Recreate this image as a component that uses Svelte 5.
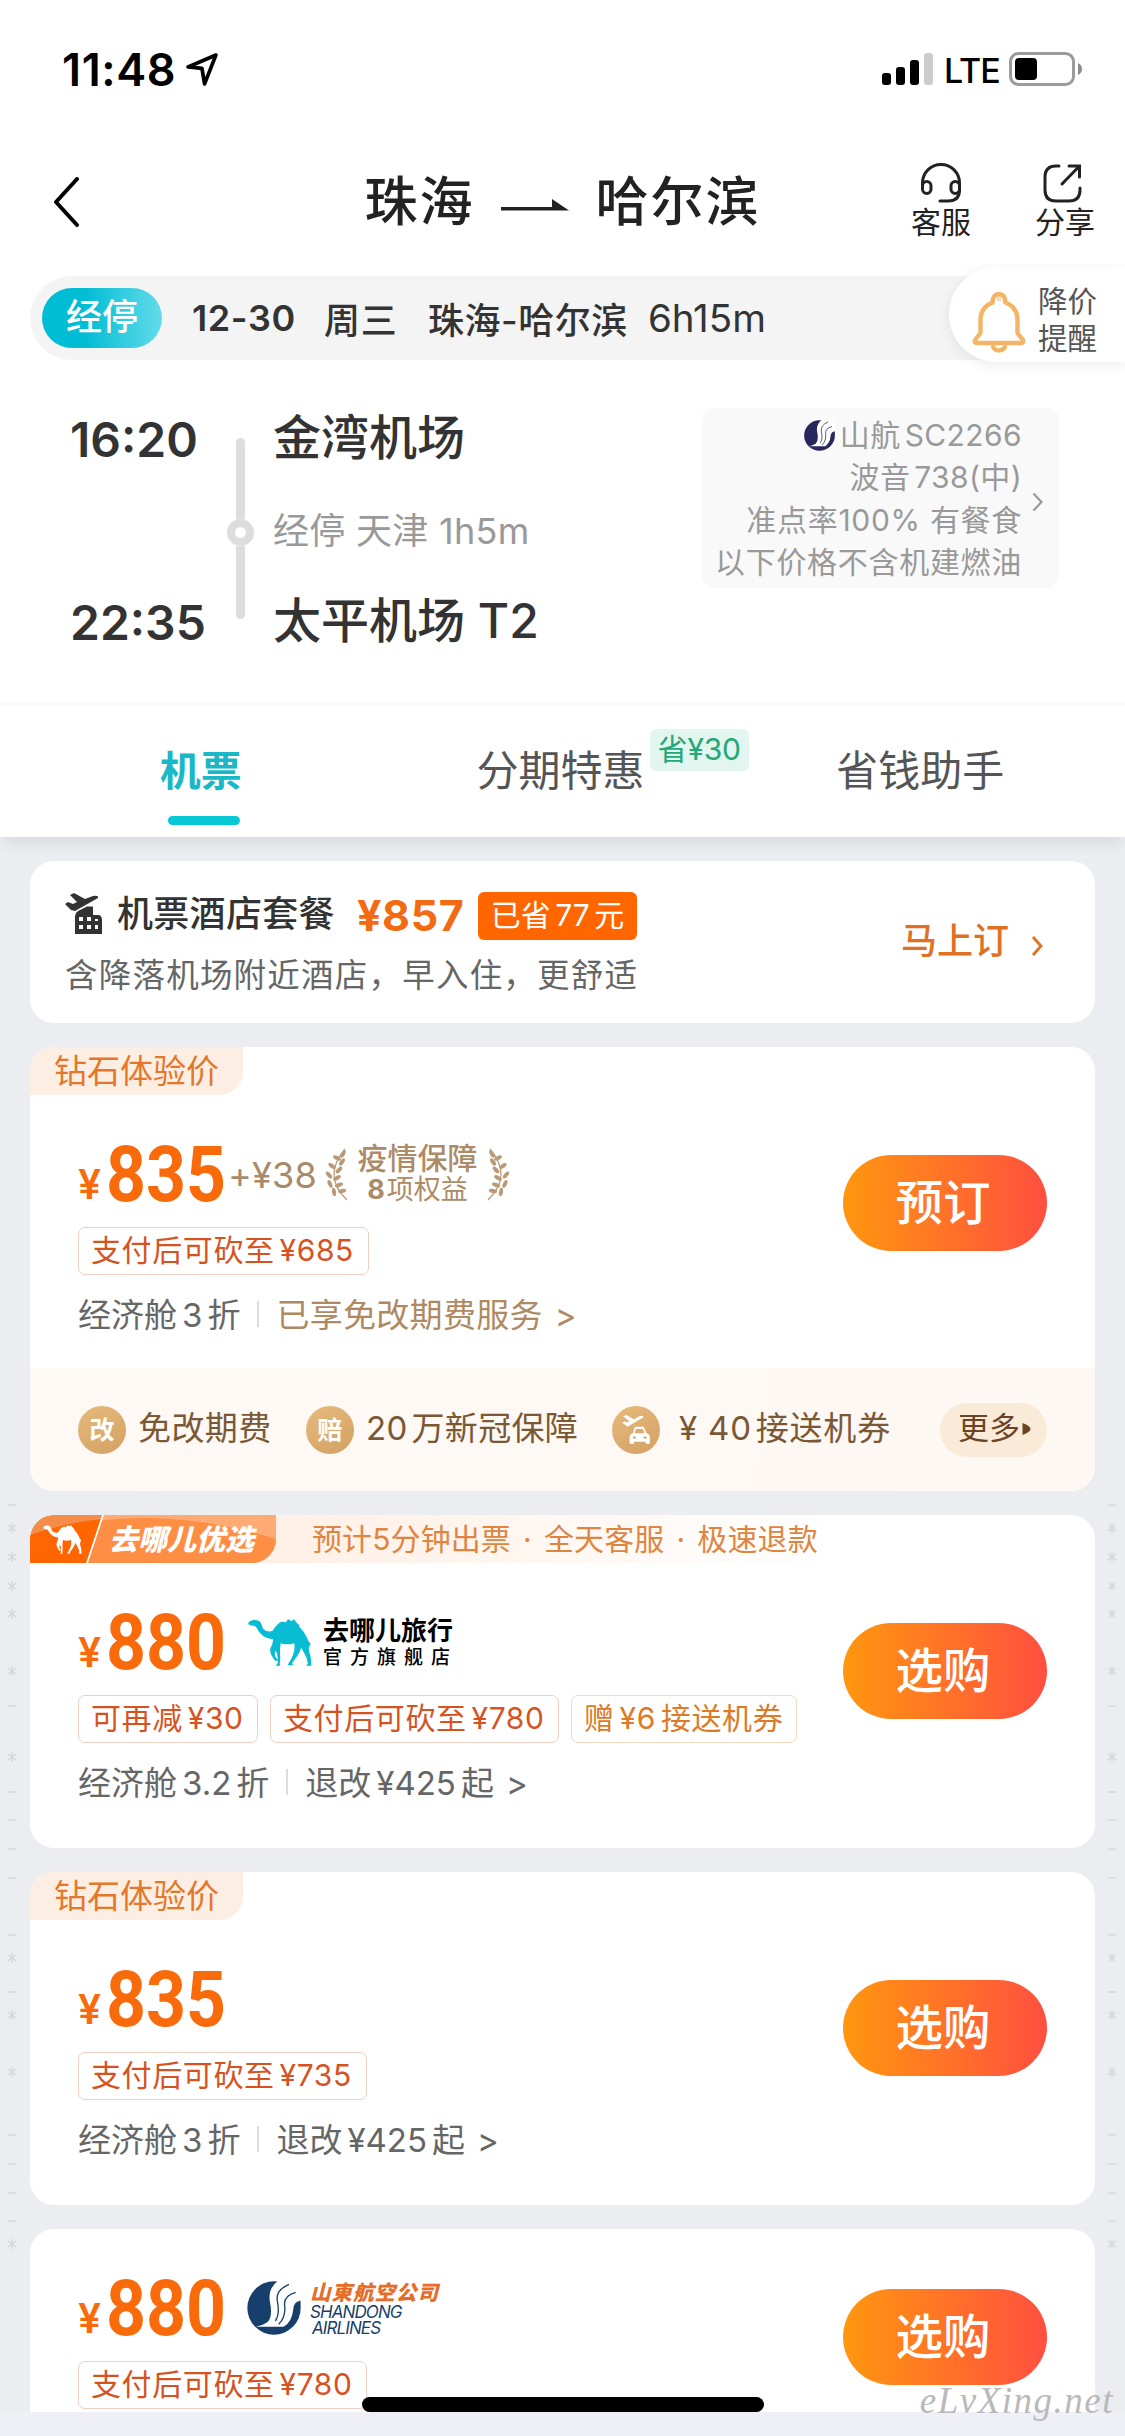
<script>
  const details = ['波音 738(中)', '准点率100% 有餐食', '以下价格不含机建燃油'];

  const offers = [
    {
      tag: '钻石体验价', price: '835', extra: true, action: '预订',
      chips: [{ label: '支付后可砍至', amount: '¥685', w: 291 }],
      cabin: '3', terms: 'free'
    },
    {
      banner: true, price: '880', brand: 'qunar', action: '选购',
      chips: [
        { label: '可再减', amount: '¥30', w: 180 },
        { label: '支付后可砍至', amount: '¥780', w: 289 },
        { label: '赠', amount: '¥6', tail: '接送机券', soft: true, w: 226 }
      ],
      cabin: '3.2', terms: 'fee'
    },
    {
      tag: '钻石体验价', price: '835', action: '选购',
      chips: [{ label: '支付后可砍至', amount: '¥735', w: 289 }],
      cabin: '3', terms: 'fee'
    },
    {
      price: '880', brand: 'shandong', action: '选购', compact: true,
      chips: [{ label: '支付后可砍至', amount: '¥780', w: 289 }]
    }
  ];

  // Faint dash and star marks running down both page margins
  const marks = [
    [1505, '-'], [1528, '*'], [1557, '*'], [1586, '*'], [1614, '*'], [1671, '*'],
    [1706, '-'], [1757, '*'], [1792, '-'], [1820, '-'], [1849, '-'], [1878, '-'],
    [1935, '-'], [1958, '*'], [1992, '-'], [2015, '*'], [2072, '*'], [2135, '-'],
    [2164, '-'], [2193, '-'], [2221, '-'], [2244, '*']
  ];

  const leaves = [
    [18, 7, -60], [12, 11, 25], [17, 15, -55], [7, 19, 35], [14, 23, -45],
    [4, 28, 50], [12, 31, -30], [5, 37, 65], [14, 38, -20], [9, 45, 80], [17, 44, -10]
  ];
</script>

{#snippet camel(cls)}
  <svg class={cls} viewBox="53 56 190 140" preserveAspectRatio="none">
    <path fill="currentColor" d="M54 68Q58 60 72 59Q84 58 90 66Q96 76 97 84Q108 96 125 92Q135 76 146 67Q155 62 165 66L172 57L182 62L190 57L198 68Q206 72 206 80Q222 96 228 112Q232 125 239 130L234 140Q232 150 238 165Q241 178 240 190L242 195H226L231 188Q228 170 220 158L211 142Q208 155 198 168L184 187L187 194H170Q180 180 186 165Q194 145 190 128Q170 135 150 128Q148 140 148 155Q150 175 147 190L150 195H135L141 188Q142 170 139 158L134 150Q132 160 133 166L142 179L134 181Q114 156 120 142Q128 130 127 116Q112 115 100 108Q88 100 82 88Q78 78 70 76Q60 77 54 72Z" />
  </svg>
{/snippet}

{#snippet airline(cls)}
  <svg class={cls} viewBox="51 60 162 162">
    <circle cx="132" cy="141" r="80" fill="currentColor" />
    <path fill="#fff" d="M146 58Q112 82 120 124Q129 168 112 184Q98 194 78 197H164Q212 170 208 116L216 90L196 56Z" />
    <path fill="none" stroke="currentColor" stroke-width="4" d="M177 70Q136 88 142 120Q150 160 136 180M197 94Q160 104 164 134Q168 168 146 190" />
    <path fill="currentColor" d="M212 120Q192 120 190 144Q186 184 160 198Q208 200 212 120Z" />
  </svg>
{/snippet}

{#snippet laurel(cls)}
  <svg class={cls} viewBox="0 0 24 54">
    <path d="M22 53Q-3 29 20 2" fill="none" stroke="#b99a77" stroke-width="1.2" />
    {#each leaves as [x, y, r]}
      <ellipse cx={x} cy={y} rx="4.2" ry="2" fill="#b99a77" transform="rotate({r} {x} {y})" />
    {/each}
  </svg>
{/snippet}

<div class="screen">
  <header class="status">
    <span class="clock">11:48</span>
    <svg class="locate" viewBox="0 0 32 32"><path d="M2 13.500L29 2L18 30L15.500 15Z" fill="none" stroke="#000" stroke-width="3.600" stroke-linejoin="round" /></svg>
    <svg class="signal" viewBox="0 0 52 34">
      <rect x="0" y="21" width="9" height="12" rx="3" /><rect x="14" y="15" width="9" height="18" rx="3" />
      <rect x="28" y="8" width="9" height="25" rx="3" /><rect x="42" y="1" width="9" height="32" rx="3" fill="#ccc" />
    </svg>
    <span class="lte">LTE</span>
    <svg class="battery" viewBox="0 0 74 34">
      <rect x="1.500" y="1.500" width="63" height="31" rx="8" fill="none" stroke="#9b9b9b" stroke-width="3" />
      <rect x="6" y="6" width="22" height="22" rx="4" /><path d="M69 11Q73 13 73 17T69 23Z" fill="#8b8b8b" />
    </svg>
  </header>

  <nav class="nav">
    <svg class="back" viewBox="0 0 26 50"><path d="M24 2L3 25L24 48" fill="none" stroke="#000" stroke-width="4" stroke-linecap="round" stroke-linejoin="round" /></svg>
    <h1>
      <span>珠海</span>
      <svg viewBox="0 0 68 12"><path d="M0 8H51V0L68 11.500H0Z" fill="#222" /></svg>
      <span>哈尔滨</span>
    </h1>
    <div class="actions">
      <div class="action">
        <svg viewBox="0 0 42 40"><path d="M2.500 23V20A18.500 18.500 0 0 1 39.500 20V27Q39.500 38 28 38H20" /><rect x="2.500" y="18.500" width="8.500" height="12" rx="4.200" /><rect x="31" y="18.500" width="8.500" height="12" rx="4.200" /></svg>
        <span>客服</span>
      </div>
      <div class="action">
        <svg viewBox="0 0 42 40"><path d="M17 3H14Q3 3 3 14V27Q3 38 14 38H27Q38 38 38 27V25M27 3H37.500V14M37 3.500L20 21" /></svg>
        <span>分享</span>
      </div>
    </div>
  </nav>

  <div class="strip">
    <span class="via">经停</span>
    <b class="date">12-30</b><b class="week">周三</b><b class="cities">珠海-哈尔滨</b><span class="span">6h15m</span>
    <div class="alert">
      <svg viewBox="0 0 54 62"><g fill="none" stroke="#f3b565" stroke-width="4.400" stroke-linecap="round" stroke-linejoin="round"><path d="M20.500 11.500Q21 3 27 3T33.500 11.500Q45 16 45.500 28V42L51 49Q52 52 49 52H5Q2 52 3 49L8.500 42V28Q9 16 20.500 11.500Z" /><path d="M21 56Q23 59.500 27 59.500T33 56" /></g><path d="M25 10V6Q27 3 29 6V10" fill="#f3b565" opacity=".5" /></svg>
      <span>降价<br />提醒</span>
    </div>
  </div>

  <section class="flight">
    <div class="clock-row">16:20</div>
    <div class="rail"><i></i><em></em><i></i></div>
    <div class="place">金湾机场</div>
    <div class="stop">经停 天津 1h5m</div>
    <div class="clock-row last">22:35</div>
    <div class="place last">太平机场 T2</div>
    <aside class="info">
      <div class="lines">
        <p>{@render airline('carrier')}山航<span class="code">SC2266</span></p>
        {#each details as line, i}<p class="line-{i}">{line}</p>{/each}
      </div>
      <svg viewBox="0 0 12 20"><path d="M1.500 1.500L9.500 10L1.500 18.500" fill="none" stroke="#999" stroke-width="2.200" /></svg>
    </aside>
  </section>

  <div class="tabs">
    <div class="tab active">机票</div>
    <div class="tab"><span>分期特惠</span><small>省¥30</small></div>
    <div class="tab">省钱助手</div>
  </div>

  <main class="list">
    <section class="card bundle">
      <svg class="bundle-icon" viewBox="0 0 38 42">
        <g fill="#333"><path d="M5 2L9 0L20 6L28 3Q34 2 33 5L10 18L6 17L0 11L3 9L8 11L12 9Z" /><path fill-rule="evenodd" d="M13 18L22 13.500H28V22H34Q37 23 37 27V41H10V23Q10 20 13 18ZM14 24V28H18V24ZM22 24V28H26V24ZM14 32V36H18V32ZM22 32V36H26V32ZM30 26V28H33V26ZM30 32V36H33V32Z" /></g>
      </svg>
      <div class="bundle-text">
        <div class="bundle-head"><b>机票酒店套餐</b><strong>¥857</strong><span class="saved">已省 77 元</span></div>
        <p>含降落机场附近酒店，早入住，更舒适</p>
      </div>
      <span class="go">马上订</span>
      <svg class="go-arrow" viewBox="0 0 13 22"><path d="M2 2L10 11L2 20" fill="none" stroke="#e07022" stroke-width="2.800" /></svg>
    </section>

    {#each offers as o}
      <section class="card offer" class:compact={o.compact}>
        {#if o.tag}<div class="tag">{o.tag}</div>{/if}
        {#if o.banner}
          <div class="banner">
            <div class="badge">
              <svg class="shine" viewBox="0 0 246 48" preserveAspectRatio="none"><path d="M0 20Q60 2 120 3T246 24V48H0Z" fill="#ff6500" opacity=".4" /><path d="M0 0H73L57 48H0Z" fill="#f58c4a" /><path d="M0 20Q34 8 72 4L57 48H0Z" fill="#ff6500" /><path d="M73 0L57 48" stroke="#fff" stroke-width="1.800" /></svg>
              {@render camel('camel-mini')}
              <span>去哪儿优选</span>
            </div>
            <span class="promise">预计5分钟出票 · 全天客服 · 极速退款</span>
          </div>
        {/if}
        <div class="body">
          <div class="main">
            <div class="price-row">
              <span class="yen">¥</span><span class="price"><span>{o.price}</span></span>
              {#if o.extra}
                <span class="plus">+¥38</span>
                {@render laurel('laurel')}
                <div class="cover"><b>疫情保障</b><span><strong>8</strong>项权益</span></div>
                {@render laurel('laurel flip')}
              {/if}
              {#if o.brand === 'qunar'}
                {@render camel('camel')}
                <div class="qunar"><b>去哪儿旅行</b><span>官方旗舰店</span></div>
              {/if}
              {#if o.brand === 'shandong'}
                {@render airline('sda')}
                <div class="shandong"><b>山東航空公司</b><span>SHANDONG</span><span class="second">AIRLINES</span></div>
              {/if}
            </div>
            <div class="chips">
              {#each o.chips as c}
                <span class="chip" class:soft={c.soft} style:width="{c.w}px">{c.label}<i>{c.amount}</i>{c.tail ?? ''}</span>
              {/each}
            </div>
            {#if o.terms}
              <div class="terms">
                <span>经济舱<i>{o.cabin}</i>折</span><u></u>
                {#if o.terms === 'free'}<span class="gold">已享免改期费服务<em>&gt;</em></span>
                {:else}<span>退改<i>¥425</i>起<em>&gt;</em></span>{/if}
              </div>
            {/if}
          </div>
          <button>{o.action}</button>
        </div>
        {#if o.extra}
          <footer>
            <b class="dot">改</b><span class="f1">免改期费</span>
            <b class="dot">赔</b><span class="f2">20<i></i>万新冠保障</span>
            <b class="dot"><svg viewBox="0 0 30 30"><g fill="#fff"><path d="M3 2L6 1L13 5L18 2Q22 1 22 3L7 12L2 8L4 7L7 8L9 7Z" /><path fill-rule="evenodd" d="M14 12H22L25 18Q28 19 28 22V28H24V26H13V28H9V22Q9 19 12 18ZM15 14L13.500 18H23L21.500 14ZM12 21V23H15V21ZM22 21V23H25V21Z" /></g></svg></b>
            <span class="f3">¥ 40<i></i>接送机券</span>
            <span class="more">更多<svg viewBox="0 0 8 12"><path d="M0 0Q8 3 8 6T0 12Z" fill="#6b4424" /></svg></span>
          </footer>
        {/if}
      </section>
    {/each}
  </main>

  <svg class="marks" viewBox="0 0 1125 2436">
    {#each marks as [y, kind]}
      {#each [12, 1112] as x}
        {#if kind === '-'}<path d="M{x - 4} {y}h8" />{:else}<path d="M{x} {y - 5}v10M{x - 4} {y - 3}l8 6M{x + 4} {y - 3}l-8 6" />{/if}
      {/each}
    {/each}
  </svg>
  <div class="bottom"></div>
  <div class="home"></div>
  <div class="mark">eLvXing.net</div>
</div>

<style>
  :global(body) { background: #eff0f5; }
  * { box-sizing: border-box; }
  .screen {
    position: relative; width: 1125px; height: 2436px; overflow: hidden;
    background: #ebedf1; color: #333;
    font-family: Inter, "Noto Sans CJK SC", sans-serif;
  }
  h1, p { margin: 0; font: inherit; }
  i, em { font-style: normal; }
  svg { display: block; flex: none; }
  b { font-weight: 500; }
  .status, .nav, .flight, .tabs { background: #fff; }

  .status { height: 138px; display: flex; align-items: center; padding-left: 62px; color: #000; white-space: nowrap; }
  .clock { width: 124px; font-size: 45px; font-weight: 600; letter-spacing: .6px; }
  .locate { width: 33px; height: 33px; }
  .signal { width: 52px; height: 34px; margin-left: 663px; }
  .lte { width: 75px; padding-left: 10px; font-size: 34px; font-weight: 500; letter-spacing: -1px; padding-top: 2px; }
  .battery { width: 74px; height: 34px; }

  .nav { height: 138px; padding-bottom: 10px; display: grid; grid-template-columns: 1fr auto 1fr; align-items: center; }
  .back { width: 26px; height: 50px; margin-left: 53px; }
  h1 { display: flex; align-items: center; color: #222; font-size: 53px; font-weight: 500; letter-spacing: 2px; line-height: 80px; }
  h1 svg { width: 68px; height: 12px; margin: 5px 27px 0 26px; }
  .actions { display: flex; justify-content: flex-end; gap: 62px; padding-right: 29px; }
  .action { width: 62px; display: flex; flex-direction: column; align-items: center; font-size: 30px; line-height: 38px; color: #222; }
  .action svg { width: 42px; height: 40px; fill: none; stroke: #222; stroke-width: 3; stroke-linecap: round; }
  .action + .action svg { margin-left: -5px; }

  .strip { position: relative; height: 84px; margin-left: 30px; padding-left: 12px; display: flex; align-items: center; border-radius: 42px 0 0 42px; background: #f4f4f4; white-space: nowrap; font-size: 36px; box-shadow: -42px 0 0 42px #fff; clip-path: inset(-12px 0 -20px -30px); }
  .via { width: 120px; height: 60px; border-radius: 30px; background: linear-gradient(90deg, #00bcd4 35%, #62dce9); color: #fff; text-align: center; line-height: 59px; font-weight: 500; }
  .date { width: 132px; margin-left: 30px; font-weight: 600; letter-spacing: .6px; }
  .week { width: 104px; letter-spacing: .7px; }
  .cities { width: 220px; letter-spacing: .5px; }
  .span { font-size: 38.500px; }
  .alert { position: absolute; right: 0; top: -9px; width: 176px; height: 95px; border-radius: 48px 0 0 48px; background: #fff; box-shadow: 0 3px 14px rgba(0, 0, 0, .08); display: flex; align-items: center; padding-left: 23px; color: #555; font-size: 29.500px; line-height: 37px; }
  .alert svg { width: 54px; height: 62px; margin: 14px 12px 0 0; }
  .alert span { padding-top: 11px; }

  .flight { height: 343px; padding: 48px 66px 0 70px; display: grid; grid-template-columns: 157px 46px 429px 357px; grid-template-rows: 64px 120px 62px; align-items: center; white-space: nowrap; }
  .clock-row { font-size: 48px; font-weight: 600; grid-column: 1; letter-spacing: 0; padding-bottom: 1px; }
  .clock-row.last { grid-row: 3; }
  .place { grid-column: 3; font-size: 48px; font-weight: 500; line-height: 60px; padding-bottom: 4px; }
  .place.last { grid-row: 3; }
  .stop { grid-column: 3; grid-row: 2; font-size: 36px; line-height: 44px; padding-bottom: 3px; color: #999; letter-spacing: .3px; }
  .rail { grid-column: 2; grid-row: 1 / 4; align-self: start; margin-top: 30px; width: 27px; display: flex; flex-direction: column; align-items: center; }
  .rail i { width: 9px; height: 81px; background: #ddd; border-radius: 5px 5px 0 0; }
  .rail i:last-child { height: 73px; border-radius: 0 0 5px 5px; }
  .rail em { width: 27px; height: 27px; border: 8px solid #ddd; border-radius: 50%; }
  .info { grid-column: 4; grid-row: 1 / 4; align-self: start; height: 180px; border-radius: 12px; background: #f9f9f9; color: #999; display: flex; align-items: center; padding-left: 10px; font-size: 30px; }
  .lines { width: 310px; letter-spacing: .4px; padding-top: 1px; }
  .lines p { display: flex; justify-content: flex-end; align-items: center; line-height: 42.300px; white-space: pre; }
  .line-0 { word-spacing: -5px; }
  .line-1 { letter-spacing: .7px; }
  .line-2 { letter-spacing: .7px; }
  .carrier { width: 31px; height: 31px; margin-right: 5px; color: #28275c; }
  .code { margin-left: 4px; }
  .info > svg { width: 12px; height: 20px; margin: 8px 0 0 10px; }

  .tabs { height: 134px; border-top: 2px solid #fafafa; padding: 0 23px; display: grid; grid-template-columns: repeat(3, 1fr); position: relative; box-shadow: 0 10px 14px -4px rgba(0, 0, 0, .09); color: #555; font-size: 42px; line-height: 132px; text-align: center; white-space: nowrap; }
  .tab { position: relative; left: -2px; }
  .active { color: #1ab8c6; font-weight: 700; font-size: 41px; }
  .active::after { content: ""; position: absolute; left: 147px; top: 111px; width: 72px; height: 9px; border-radius: 5px; background: #06c8d5; }
  small { position: absolute; left: 269px; top: 24px; width: 99px; height: 42px; border-radius: 6px; background: #e2f5ee; color: #23a878; font-size: 30px; line-height: 41px; letter-spacing: -.2px; }

  .list { padding: 24px 30px 0; display: flex; flex-direction: column; gap: 24px; white-space: nowrap; }
  .card { background: #fff; border-radius: 24px; overflow: hidden; flex: none; }
  .bundle { height: 162px; display: flex; padding: 31px 0 0 35px; }
  .bundle-icon { width: 38px; height: 42px; margin-top: 1px; }
  .bundle-text { width: 799px; margin-left: -38px; }
  .bundle-head { display: flex; align-items: center; height: 48px; padding-left: 52px; }
  .bundle-head b { width: 240px; font-size: 36px; letter-spacing: .3px; line-height: 44px; padding-bottom: 4px; }
  .bundle-head strong { width: 121px; font-size: 43px; color: #f26a12; letter-spacing: .6px; line-height: 48px; padding-bottom: 2px; }
  .saved { width: 159px; height: 48px; border-radius: 6px; background: #ff6600; color: #fff; font-size: 30px; line-height: 46px; text-align: center; word-spacing: -4px; }
  .bundle-text p { font-size: 32.500px; letter-spacing: 1.220px; color: #666; line-height: 48px; margin-top: 12px; }
  .go { width: 130px; margin-left: 37px; margin-top: 23px; font-size: 36px; font-weight: 500; color: #e07022; line-height: 52px; }
  .go-arrow { width: 13px; height: 22px; margin-top: 43px; }

  .tag { position: absolute; width: 213px; height: 48px; border-radius: 24px 0 24px 0; background: #fdeee3; color: #e4772a; font-size: 33px; line-height: 49px; padding-left: 24px; }
  .offer { min-height: 333px; }
  .body { display: flex; justify-content: space-between; padding: 98px 48px 0; height: 321px; }
  .compact .body { padding-top: 50px; }
  .price-row { height: 58px; display: flex; align-items: center; }
  .yen { width: 28px; color: #f96b0a; font-size: 41px; font-weight: 600; line-height: 56px; padding-top: 19px; }
  .price { width: 122px; }
  .price span { display: block; transform: scaleX(.9); transform-origin: 0 50%; font: 700 77.500px/58px Roboto, sans-serif; color: #f96b0a; padding-top: 1px; }
  .plus { width: 97px; color: #a98a68; font-size: 36px; font-weight: 400; padding-top: 2px; letter-spacing: .2px; }
  .laurel { width: 24px; height: 54px; }
  .flip { transform: scaleX(-1); }
  .cover { width: 137px; display: flex; flex-direction: column; align-items: center; color: #ad8b66; }
  .cover b { font-size: 30px; line-height: 31px; }
  .cover span { font-size: 27px; line-height: 31px; }
  .cover strong { margin-right: 2px; }
  .camel { width: 64px; height: 47px; margin-left: 20px; color: #08bcd4; }
  .qunar { margin-left: 11px; color: #000; display: flex; flex-direction: column; padding-top: 2px; }
  .qunar b { font-size: 26px; line-height: 30px; font-weight: 700; }
  .qunar span { font-size: 19px; line-height: 24px; letter-spacing: 8px; font-weight: 500; }
  .sda { width: 54px; height: 54px; margin-left: 19px; color: #173f6b; }
  .shandong { margin-left: 9px; display: flex; flex-direction: column; font-style: italic; color: #173f6b; font-size: 17px; line-height: 16px; }
  .shandong b { font-weight: 900; font-size: 20.500px; line-height: 23px; color: #e66c27; letter-spacing: 1px; }
  .shandong span { letter-spacing: -.9px; }
  .shandong .second { padding-left: 2px; }
  .chips { display: flex; gap: 12px; margin-top: 24px; }
  .chip { height: 48px; border: 1.500px solid #efcfc0; border-radius: 7px; color: #d6531f; font-size: 30px; line-height: 45px; letter-spacing: .6px; display: flex; padding-left: 12px; }
  .chip.soft { color: #dd7a25; border-color: #f3d9c2; }
  .chip i { margin: 0 5px; }
  .terms { display: flex; align-items: center; height: 48px; margin-top: 14px; color: #666; font-size: 33px; }
  .terms i { margin: 0 5px; }
  .terms u { width: 2px; height: 26px; margin: 2px 17px 0 17px; background: #ddd; }
  .terms em { margin-left: 12px; }
  .gold { color: #ae8a62; letter-spacing: .3px; }
  button { width: 204px; height: 96px; margin-top: 10px; border: 0; border-radius: 48px; padding: 0 4px 1px 0; background: linear-gradient(90deg, #ff970f, #ff4f40); color: #fff; font: 500 47.500px/94px Inter, "Noto Sans CJK SC", sans-serif; }

  footer { height: 123px; display: flex; align-items: center; padding-left: 48px; background: linear-gradient(100deg, #fef9f5, #fdf8f3); color: #7a5835; font-size: 33px; line-height: 44px; }
  .dot { width: 48px; height: 48px; border-radius: 50%; background: linear-gradient(150deg, #e6bb7b, #d3a064); color: #fff; font-size: 25px; font-weight: 700; display: flex; justify-content: center; align-items: center; }
  .dot svg { width: 32px; height: 32px; }
  footer span { padding-bottom: 3px; }
  .f1 { width: 180px; padding-left: 12px; letter-spacing: .4px; }
  .f2 { width: 258px; padding-left: 12px; letter-spacing: .3px; }
  .f3 { width: 268px; padding-left: 19px; letter-spacing: .8px; }
  footer i { display: inline-block; width: 4px; }
  .more { width: 107px; height: 54px; border-radius: 27px; background: #faebd9; font-size: 31px; display: flex; align-items: center; padding-left: 18px; color: #6b4424; margin-left: 12px; }
  .more svg { width: 9px; height: 12px; margin: 2px 0 0 2px; }

  .banner { position: absolute; display: flex; width: 810px; height: 48px; border-top-left-radius: 24px; background: linear-gradient(90deg, #fff0e6 30%, #fff); overflow: hidden; }
  .badge { position: relative; width: 246px; height: 48px; border-radius: 24px 0 24px 0; background: #ffab73; overflow: hidden; flex: none; }
  .shine { position: absolute; width: 246px; height: 48px; }
  :global(.camel-mini) { position: absolute; left: 13px; top: 10px; width: 39px; height: 29px; color: #fff; }
  .badge span { position: absolute; left: 79px; top: 0; color: #fff; font-size: 29px; font-weight: 900; font-style: italic; line-height: 49px; }
  .promise { margin-left: 36px; color: #e0853f; font-size: 30px; line-height: 49px; word-spacing: 3.600px; letter-spacing: .1px; }

  .marks { position: absolute; left: 0; top: 0; width: 1125px; height: 2436px; fill: none; stroke: #d5d7dc; stroke-width: 1.500; pointer-events: none; }
  .bottom { position: absolute; left: 0; right: 0; bottom: 0; height: 24px; background: #eff0f5; }
  .home { position: absolute; left: 362px; top: 2397px; width: 402px; height: 15px; border-radius: 8px; background: #000; }
  .mark { position: absolute; right: 11px; bottom: 11px; color: #b9b9b9; font: italic 37px/48px "Liberation Serif", serif; letter-spacing: 1.500px; }
</style>
